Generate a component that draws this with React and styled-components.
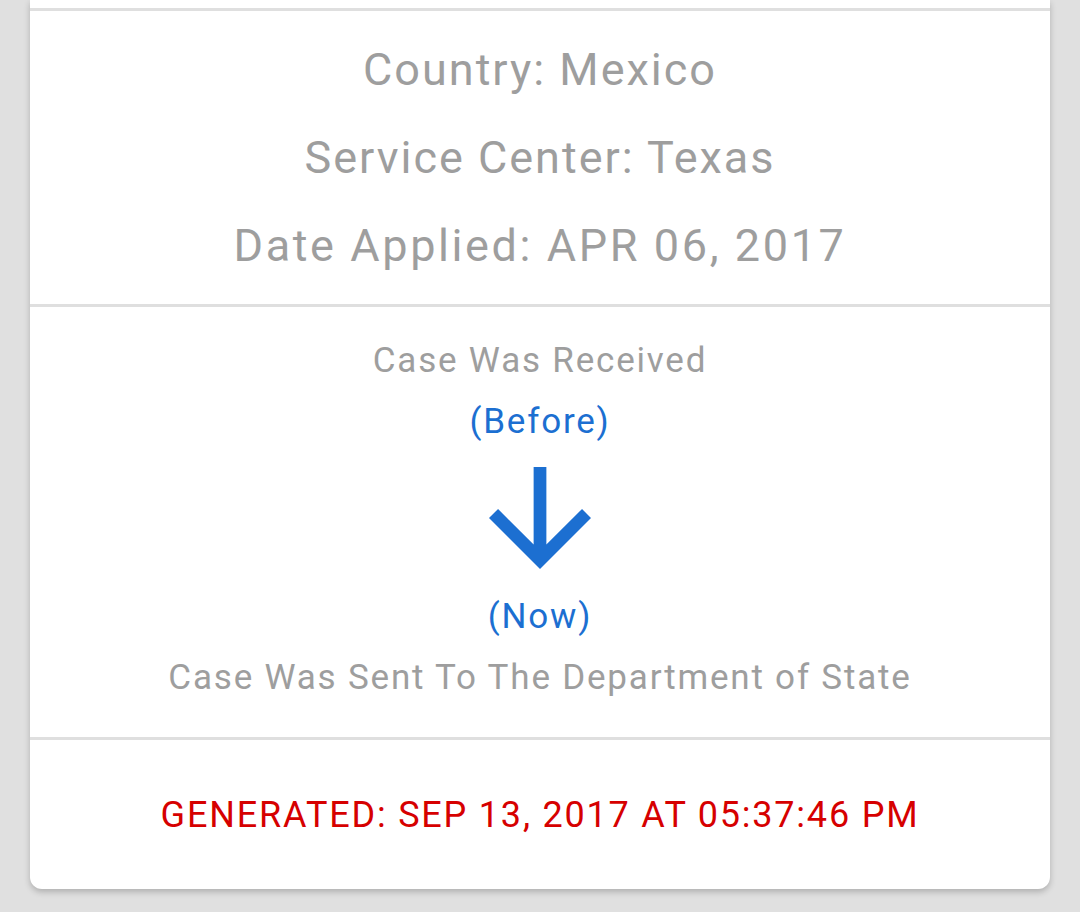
import React from 'react'
import styled, { createGlobalStyle } from 'styled-components'

const GlobalStyle = createGlobalStyle`
  html, body {
    margin: 0;
    padding: 0;
    background: #e0e0e0;
    font-family: Roboto, "Noto Sans", "Liberation Sans", sans-serif;
  }
`

const Page = styled.div`
  min-height: 912px;
  padding: 0 30px;
  box-sizing: border-box;
`

const Card = styled.div`
  background: #fff;
  border-radius: 0 0 12px 12px;
  box-shadow: 0 3px 6px rgba(0, 0, 0, 0.22);
  overflow: hidden;
`

const TopEdge = styled.div`
  height: 8px;
`

const Section = styled.div`
  border-top: 3px solid #dfdfdf;
  padding: ${p => p.$pad};
  display: flex;
  flex-direction: column;
  align-items: center;
  text-align: center;
`

const InfoLine = styled.div`
  font-size: 45px;
  line-height: 88px;
  letter-spacing: ${p => (p.$wide ? '2.6px' : '2px')};
  color: #9e9e9e;
`

const StatusLine = styled.div`
  font-size: 35px;
  line-height: 61px;
  letter-spacing: 1.8px;
  color: ${p => (p.$accent ? '#1c6fd1' : '#9e9e9e')};
`

const ArrowWrap = styled.div`
  width: 102px;
  height: 102px;
  margin: 15px 0 17px;
  svg {
    display: block;
  }
`

const Generated = styled.div`
  font-size: 36px;
  line-height: 60px;
  letter-spacing: 1.8px;
  color: #d60000;
`

const ArrowDown = () => (
  <svg width="102" height="102" viewBox="4 4 16 16">
    <path
      fill="#1c6fd1"
      d="M20 12l-1.41-1.41L13 16.17V4h-2v12.17l-5.58-5.59L4 12l8 8 8-8z"
    />
  </svg>
)

export default function App() {
  return (
    <Page>
      <GlobalStyle />
      <Card>
        <TopEdge />
        <Section $pad="15px 0 14px">
          <InfoLine>Country: Mexico</InfoLine>
          <InfoLine>Service Center: Texas</InfoLine>
          <InfoLine $wide>Date Applied: APR 06, 2017</InfoLine>
        </Section>
        <Section $pad="23px 0 29px">
          <StatusLine>Case Was Received</StatusLine>
          <StatusLine $accent>(Before)</StatusLine>
          <ArrowWrap>
            <ArrowDown />
          </ArrowWrap>
          <StatusLine $accent>(Now)</StatusLine>
          <StatusLine>Case Was Sent To The Department of State</StatusLine>
        </Section>
        <Section $pad="45px 0 44px">
          <Generated>GENERATED: SEP 13, 2017 AT 05:37:46 PM</Generated>
        </Section>
      </Card>
    </Page>
  )
}
